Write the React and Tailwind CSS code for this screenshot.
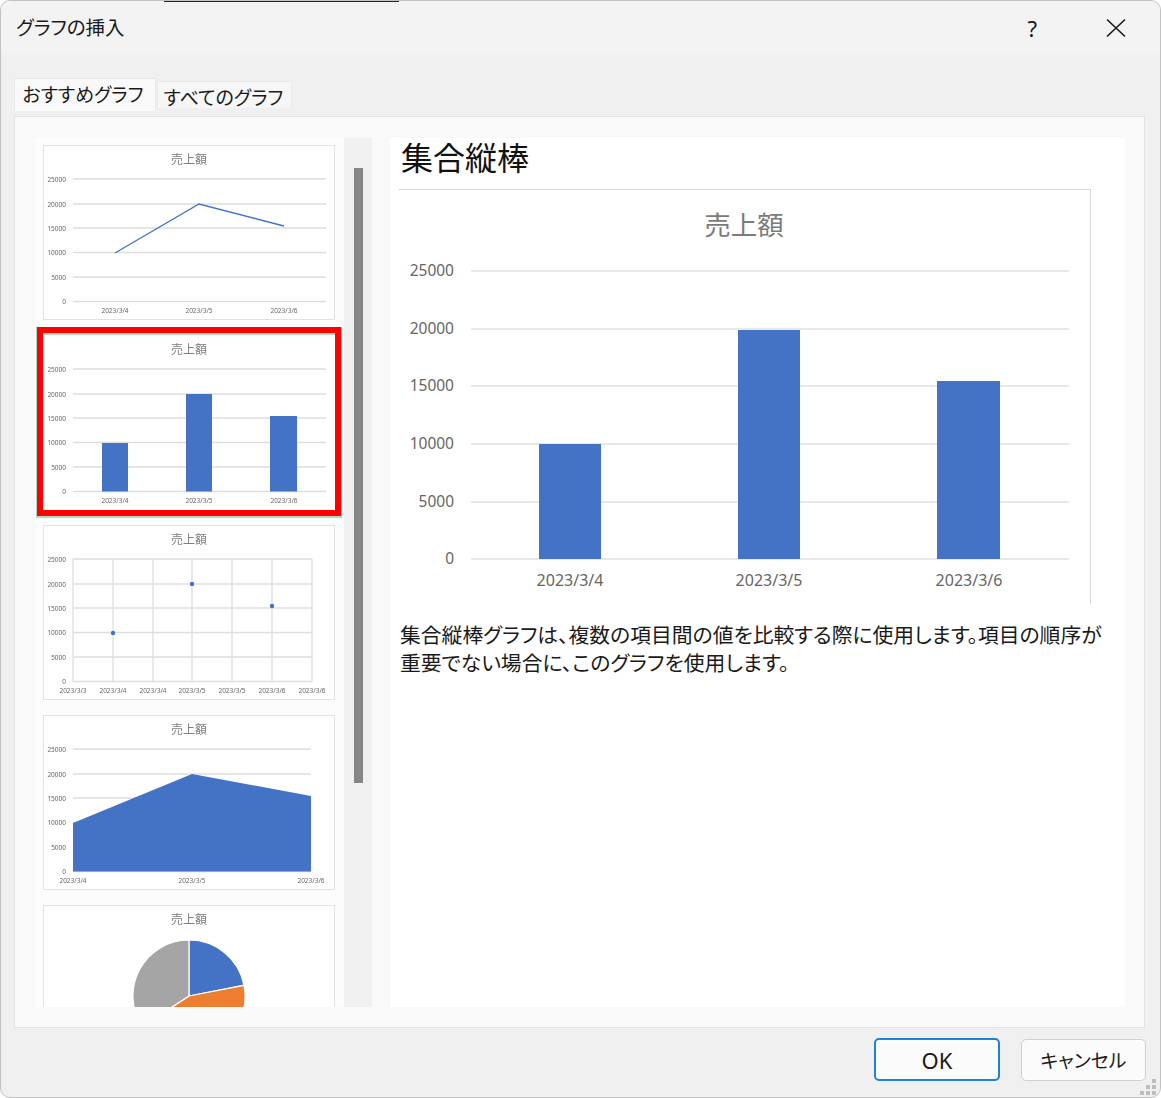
const GRID_Y = [34, 59, 83, 107.5, 132, 156.5];
const VALUES = ["25000", "20000", "15000", "10000", "5000", "0"];

function ThumbFrame({ children, selected, lineEnd = 283 }) {
  return (
    <div
      className={
        selected
          ? "w-[292px] h-[177px] -mt-[2px] shrink-0 bg-white border-t-2 border-[#a8dcbf] shadow-[0_1px_0_7px_#a8dcbf] outline-[6px] outline-solid outline-[#ff0000] relative"
          : "w-[292px] h-[175px] shrink-0 bg-white border border-[#e3e3e3]"
      }
    >
      <svg
        width={selected ? 292 : 290}
        height={175 - (selected ? 0 : 2)}
        viewBox={selected ? "0 0 292 175" : "1 1 290 173"}
        className="block blur-[0.4px]"
      >
        <text x="146" y="19" textAnchor="middle" fontSize="12" fill="#7f7f7f">売上額</text>
        {GRID_Y.map((y, i) => (
          <g key={y}>
            <line x1="30" x2={lineEnd} y1={y} y2={y} stroke="#dedede" strokeWidth="1.3" />
            <text x="23" y={y + 2.5} textAnchor="end" fontSize="6.5" fill="#666">{VALUES[i]}</text>
          </g>
        ))}
        {children}
      </svg>
    </div>
  );
}

function XLabels({ items, y = 167.5 }) {
  return items.map(([x, t], i) => (
    <text key={i} x={x} y={y} textAnchor="middle" fontSize="6.5" fill="#666">{t}</text>
  ));
}

const THREE = [[72, "2023/3/4"], [156, "2023/3/5"], [241, "2023/3/6"]];

function LineThumb() {
  return (
    <ThumbFrame>
      <polyline points="72,108 156,59 241,81" fill="none" stroke="#4472c4" strokeWidth="1.3" />
      <XLabels items={THREE} />
    </ThumbFrame>
  );
}

function BarThumb() {
  return (
    <ThumbFrame selected>
      <rect x="59" y="108" width="26" height="48.5" fill="#4472c4" />
      <rect x="143" y="59" width="26" height="97.5" fill="#4472c4" />
      <rect x="227" y="81" width="27" height="75.5" fill="#4472c4" />
      <XLabels items={THREE} />
    </ThumbFrame>
  );
}

function ScatterThumb() {
  const xs = [30, 70, 110, 149, 189, 229, 269];
  const dates = ["2023/3/3", "2023/3/4", "2023/3/4", "2023/3/5", "2023/3/5", "2023/3/6", "2023/3/6"];
  return (
    <ThumbFrame lineEnd={269}>
      {xs.map((x) => (
        <line key={x} x1={x} x2={x} y1="34" y2="156.5" stroke="#dedede" strokeWidth="1.3" />
      ))}
      <circle cx="70" cy="108" r="2.2" fill="#4472c4" />
      <circle cx="149" cy="59" r="2.2" fill="#4472c4" />
      <circle cx="229" cy="81" r="2.2" fill="#4472c4" />
      <XLabels items={xs.map((x, i) => [x, dates[i]])} />
    </ThumbFrame>
  );
}

function AreaThumb() {
  return (
    <ThumbFrame lineEnd={268}>
      <polygon points="30,108 149,59 268,81 268,156.5 30,156.5" fill="#4472c4" />
      <XLabels items={[[30, "2023/3/4"], [149, "2023/3/5"], [268, "2023/3/6"]]} />
    </ThumbFrame>
  );
}

function PieThumb() {
  return (
    <div className="w-[292px] h-[175px] shrink-0 bg-white border border-[#e3e3e3]">
      <svg width="290" height="173" viewBox="1 1 290 173" className="block blur-[0.4px]">
        <text x="146" y="19" textAnchor="middle" fontSize="12" fill="#7f7f7f">売上額</text>
        <g stroke="#ffffff" strokeWidth="1.2">
          <path d="M146 91 L146 35 A56 56 0 0 1 201 80.3 Z" fill="#4472c4" />
          <path d="M146 91 L201 80.3 A56 56 0 0 1 99 121.5 Z" fill="#ed7d31" />
          <path d="M146 91 L99 121.5 A56 56 0 0 1 146 35 Z" fill="#a5a5a5" />
        </g>
      </svg>
    </div>
  );
}

function MainChart() {
  const ys = [271, 329, 386, 444, 502, 559];
  const bars = [[539, 444, 62], [738, 330, 62], [937, 381, 63]];
  const dates = [[570, "2023/3/4"], [769, "2023/3/5"], [969, "2023/3/6"]];
  return (
    <div className="w-[692px] h-[415px] border-t border-r border-[#d9d9d9]">
      <svg width="691" height="414" viewBox="399 190 691 414" className="block">
        <text x="744" y="235" textAnchor="middle" fontSize="26.5" fill="#7b7b7b">売上額</text>
        {ys.map((y, i) => (
          <g key={y}>
            <line x1="471" x2="1069" y1={y} y2={y} stroke="#e0e0e0" strokeWidth="1.5" />
            <text x="454" y={y + 5} textAnchor="end" fontSize="15.5" fill="#666">{VALUES[i]}</text>
          </g>
        ))}
        {bars.map(([x, y, w]) => (
          <rect key={x} x={x} y={y} width={w} height={559 - y} fill="#4472c4" />
        ))}
        {dates.map(([x, t]) => (
          <text key={x} x={x} y="586" textAnchor="middle" fontSize="16" fill="#666">{t}</text>
        ))}
      </svg>
    </div>
  );
}

export default function App() {
  return (
    <div className="w-[1161px] h-[1098px] bg-white font-['Noto_Sans','Noto_Sans_CJK_JP',sans-serif] [font-feature-settings:'palt']">
      <div className="relative w-full h-full flex flex-col rounded-[10px] border border-[#c2c2c2] bg-[#f0f0f0] overflow-hidden text-[#1a1a1a]">
        <div className="absolute top-[-1px] left-[163px] w-[235px] h-[2px] bg-[#262626]" />

        <div className="h-[54px] shrink-0 bg-[#f3f3f3] flex items-center justify-between pl-[15px] pr-[34px]">
          <span className="text-[19.5px] leading-none">グラフの挿入</span>
          <div className="flex items-center gap-[69px]">
            <span className="text-[22px] leading-none">?</span>
            <svg width="20" height="20" viewBox="0 0 20 20" fill="none" stroke="#1f1f1f" strokeWidth="1.7">
              <path d="M1 1.5 L19 18.5 M19 1.5 L1 18.5" />
            </svg>
          </div>
        </div>

        <div className="h-[61px] shrink-0 pl-[13px] pt-[23px] flex items-start">
          <div className="w-[142px] h-[33px] bg-[#f9f9f9] border border-b-0 border-[#e8e8e8] flex items-center justify-center text-[19px] leading-none pr-[4px]">
            おすすめグラフ
          </div>
          <div className="ml-[1px] mt-[3px] w-[135px] h-[27px] bg-[#f6f6f6] border border-b-0 border-[#e8e8e8] flex items-center justify-center text-[19px] leading-none pt-[6px] pr-[2px]">
            すべてのグラフ
          </div>
        </div>

        <div className="ml-[13px] w-[1131px] h-[912px] shrink-0 bg-[#f9f9f9] border border-[#e3e3e3] pl-[20px] pt-[21px] flex items-start">
          <div className="w-[309px] h-[869px] bg-[#fcfcfc] overflow-hidden pl-[8px] pt-[7px] flex flex-col gap-[15px]">
            <LineThumb />
            <BarThumb />
            <ScatterThumb />
            <AreaThumb />
            <PieThumb />
          </div>
          <div className="w-[28px] h-[869px] bg-[#f0f0f0] pt-[30px] pl-[10px]">
            <div className="w-[9px] h-[615px] bg-[#868686]" />
          </div>
          <div className="ml-[18px] w-[735px] h-[869px] bg-white pl-[9px]">
            <h2 className="h-[51px] pl-[2px] -mt-[1px] pb-[1px] box-content text-[32px] leading-[42px] font-normal text-[#111]">集合縦棒</h2>
            <MainChart />
            <p className="mt-[17px] pl-[1px] text-[20.8px] leading-[28px] w-[715px]">
              集合縦棒グラフは、複数の項目間の値を比較する際に使用します。項目の順序が重要でない場合に、このグラフを使用します。
            </p>
          </div>
        </div>

        <div className="flex-1 flex justify-end items-start gap-[21px] pr-[14px] pt-[10px]">
          <button className="w-[126px] h-[43px] rounded-[5px] border-2 border-[#1f82d6] bg-[#fbfbfb] text-[22px] leading-none">OK</button>
          <button className="w-[125px] h-[42px] mt-[1px] pt-[3px] rounded-[5px] border border-[#d0d0d0] bg-[#fbfbfb] text-[19px] leading-none">キャンセル</button>
        </div>

        <svg width="18" height="18" viewBox="0 0 18 18" className="absolute right-[2px] bottom-[1px]" fill="#bdbdbd">
          <rect x="12" y="1" width="4" height="4" />
          <rect x="6" y="7" width="4" height="4" />
          <rect x="12" y="7" width="4" height="4" />
          <rect x="0" y="13" width="4" height="4" />
          <rect x="6" y="13" width="4" height="4" />
          <rect x="12" y="13" width="4" height="4" />
        </svg>
      </div>
    </div>
  );
}
